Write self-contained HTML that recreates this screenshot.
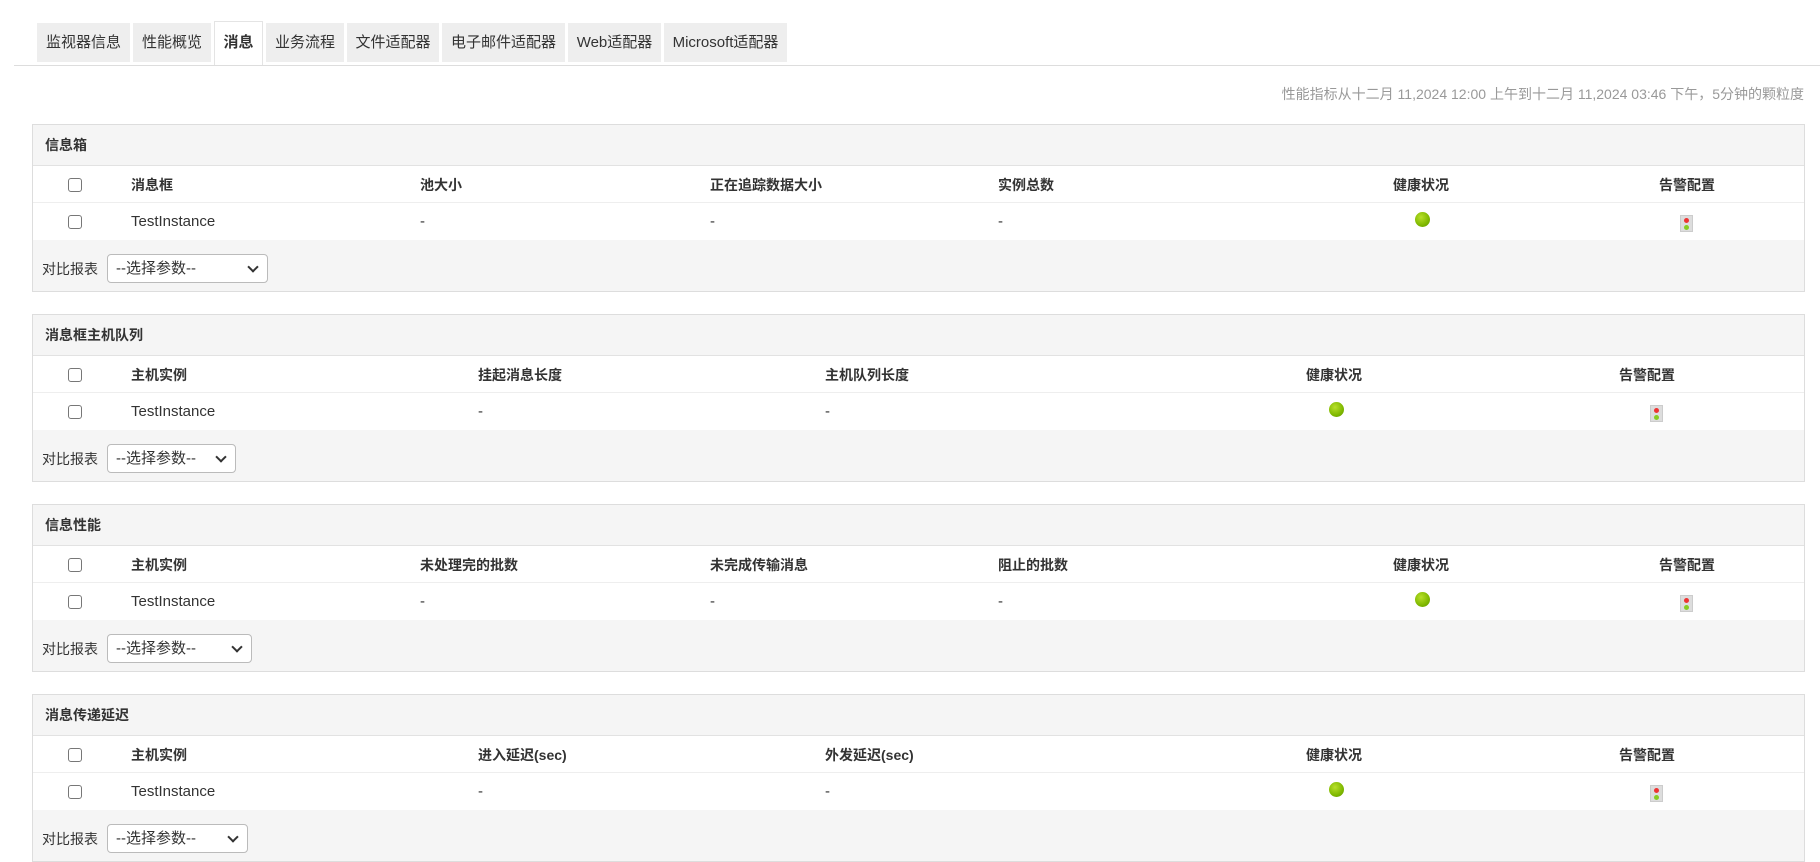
<!DOCTYPE html>
<html><head><meta charset="utf-8">
<style>
*{box-sizing:border-box;margin:0;padding:0}
body{width:1820px;height:844px;overflow:hidden;background:#fff;font-family:"Liberation Sans","Noto Sans CJK SC",sans-serif;font-size:15px;color:#333;position:relative}
.tab{position:absolute;top:23px;height:39px;background:#eee;line-height:39px;text-align:center;font-size:15px;color:#333}
.tab.act{top:21px;height:44px;background:#fff;border:1px solid #e4e4e4;border-bottom:none;font-weight:bold;line-height:41px}
.line{position:absolute;left:14px;right:0;top:65px;height:1px;background:#ddd}
.time{position:absolute;right:16px;top:84px;font-size:14px;color:#999}
.panel{position:absolute;left:32px;width:1773px;height:168px;border:1px solid #ddd;background:#f5f5f5}
.ph{position:absolute;left:0;right:0;top:0;height:41px;border-bottom:1px solid #e2e2e2;font-weight:bold;font-size:14px;line-height:41px;padding-left:12px}
.rows{position:absolute;left:0;right:0;top:41px;height:74px;background:#fff}
.hr{position:absolute;left:0;right:0;top:0;height:37px;border-bottom:1px solid #eee}
.c{position:absolute;white-space:nowrap}
.d{top:47px}
.b{font-weight:bold;font-size:14px}
.cb{position:absolute;left:35px;width:14px;height:14px;border:1px solid #777;border-radius:3px;background:#fff}
.dot{position:absolute;width:15px;height:15px;border-radius:50%;background:radial-gradient(circle at 40% 35%,#b8e02a,#7fb800 60%,#5f9500)}
.tl{position:absolute;width:13px;height:17px;background:#ddd;border:1px solid #ccc}
.tl:before{content:"";position:absolute;left:3px;top:2px;width:5px;height:5px;border-radius:50%;background:#e33}
.tl:after{content:"";position:absolute;left:3px;top:9px;width:5px;height:5px;border-radius:50%;background:#8c2}
.ft{position:absolute;left:9px;top:134px;font-size:14px}
.sel{position:absolute;left:74px;top:129px;height:29px;border:1px solid #bbb;border-radius:4px;background:#fff;font-size:15px;line-height:27px;padding-left:8px}
.sel:after{content:"";position:absolute;right:10px;top:8px;width:6px;height:6px;border-right:2px solid #333;border-bottom:2px solid #333;transform:rotate(45deg)}
</style></head><body>
<div class="tab" style="left:37px;width:93px">监视器信息</div>
<div class="tab" style="left:133px;width:78px">性能概览</div>
<div class="tab act" style="left:214px;width:49px">消息</div>
<div class="tab" style="left:266px;width:78px">业务流程</div>
<div class="tab" style="left:347px;width:92px">文件适配器</div>
<div class="tab" style="left:442px;width:123px">电子邮件适配器</div>
<div class="tab" style="left:568px;width:93px">Web适配器</div>
<div class="tab" style="left:664px;width:123px">Microsoft适配器</div>
<div class="line"></div>
<div class="time">性能指标从十二月 11,2024 12:00 上午到十二月 11,2024 03:46 下午，5分钟的颗粒度</div>

<div class="panel" style="top:124px">
<div class="ph">信息箱</div>
<div class="rows"><div class="hr"></div>
<div class="cb" style="top:12px"></div><div class="c b" style="left:98px;top:9px">消息框</div><div class="c b" style="left:387px;top:9px">池大小</div><div class="c b" style="left:677px;top:9px">正在追踪数据大小</div><div class="c b" style="left:965px;top:9px">实例总数</div><div class="c b" style="left:1360px;top:9px">健康状况</div><div class="c b" style="left:1626px;top:9px">告警配置</div>
<div class="cb" style="top:49px"></div><div class="c d" style="left:98px">TestInstance</div><div class="c d" style="left:387px">-</div><div class="c d" style="left:677px">-</div><div class="c d" style="left:965px">-</div><div class="dot" style="left:1382px;top:46px"></div><div class="tl" style="left:1647px;top:49px"></div>
</div>
<div class="ft">对比报表</div><div class="sel" style="width:161px">--选择参数--</div>
</div>

<div class="panel" style="top:314px">
<div class="ph">消息框主机队列</div>
<div class="rows"><div class="hr"></div>
<div class="cb" style="top:12px"></div><div class="c b" style="left:98px;top:9px">主机实例</div><div class="c b" style="left:445px;top:9px">挂起消息长度</div><div class="c b" style="left:792px;top:9px">主机队列长度</div><div class="c b" style="left:1273px;top:9px">健康状况</div><div class="c b" style="left:1586px;top:9px">告警配置</div>
<div class="cb" style="top:49px"></div><div class="c d" style="left:98px">TestInstance</div><div class="c d" style="left:445px">-</div><div class="c d" style="left:792px">-</div><div class="dot" style="left:1296px;top:46px"></div><div class="tl" style="left:1617px;top:49px"></div>
</div>
<div class="ft">对比报表</div><div class="sel" style="width:129px">--选择参数--</div>
</div>

<div class="panel" style="top:504px">
<div class="ph">信息性能</div>
<div class="rows"><div class="hr"></div>
<div class="cb" style="top:12px"></div><div class="c b" style="left:98px;top:9px">主机实例</div><div class="c b" style="left:387px;top:9px">未处理完的批数</div><div class="c b" style="left:677px;top:9px">未完成传输消息</div><div class="c b" style="left:965px;top:9px">阻止的批数</div><div class="c b" style="left:1360px;top:9px">健康状况</div><div class="c b" style="left:1626px;top:9px">告警配置</div>
<div class="cb" style="top:49px"></div><div class="c d" style="left:98px">TestInstance</div><div class="c d" style="left:387px">-</div><div class="c d" style="left:677px">-</div><div class="c d" style="left:965px">-</div><div class="dot" style="left:1382px;top:46px"></div><div class="tl" style="left:1647px;top:49px"></div>
</div>
<div class="ft">对比报表</div><div class="sel" style="width:145px">--选择参数--</div>
</div>

<div class="panel" style="top:694px">
<div class="ph">消息传递延迟</div>
<div class="rows"><div class="hr"></div>
<div class="cb" style="top:12px"></div><div class="c b" style="left:98px;top:9px">主机实例</div><div class="c b" style="left:445px;top:9px">进入延迟(sec)</div><div class="c b" style="left:792px;top:9px">外发延迟(sec)</div><div class="c b" style="left:1273px;top:9px">健康状况</div><div class="c b" style="left:1586px;top:9px">告警配置</div>
<div class="cb" style="top:49px"></div><div class="c d" style="left:98px">TestInstance</div><div class="c d" style="left:445px">-</div><div class="c d" style="left:792px">-</div><div class="dot" style="left:1296px;top:46px"></div><div class="tl" style="left:1617px;top:49px"></div>
</div>
<div class="ft">对比报表</div><div class="sel" style="width:141px">--选择参数--</div>
</div>
</body></html>
